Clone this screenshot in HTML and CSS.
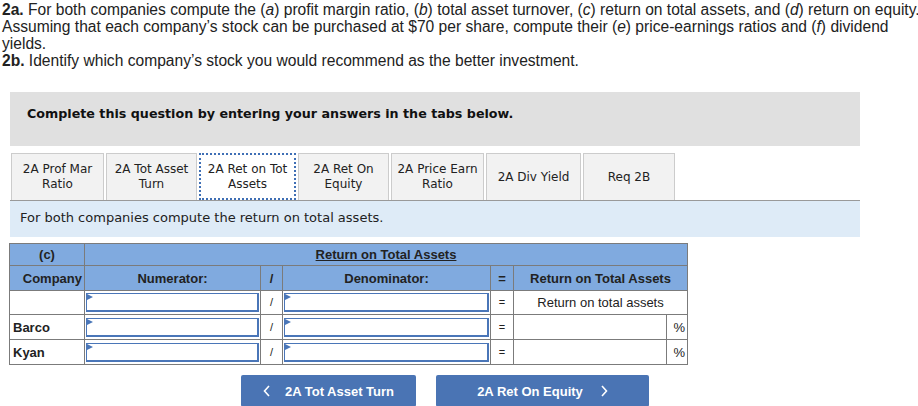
FILE: index.html
```html
<!DOCTYPE html>
<html lang="en">
<head>
    <meta charset="UTF-8">
    <title>Return on Total Assets</title>
    <link rel="stylesheet" href="styles.css">
</head>
<body>
    <div class="prompt">
        <p><b>2a.</b> For both companies compute the (<i>a</i>) profit margin ratio, (<i>b</i>) total asset turnover, (<i>c</i>) return on total assets, and (<i>d</i>) return on equity.</p>
        <p>Assuming that each company’s stock can be purchased at $70 per share, compute their (<i>e</i>) price-earnings ratios and (<i>f</i>) dividend</p>
        <p>yields.</p>
        <p><b>2b.</b> Identify which company’s stock you would recommend as the better investment.</p>
    </div>

    <div class="question">
        <div class="banner">Complete this question by entering your answers in the tabs below.</div>

        <div class="tabs">
            <div class="tab w93">2A Prof Mar<br>Ratio</div>
            <div class="tab w91">2A Tot Asset<br>Turn</div>
            <div class="tab active">2A Ret on Tot<br>Assets</div>
            <div class="tab w91">2A Ret On<br>Equity</div>
            <div class="tab w93">2A Price Earn<br>Ratio</div>
            <div class="tab w95">2A Div Yield</div>
            <div class="tab w92">Req 2B</div>
        </div>

        <div class="instructions">For both companies compute the return on total assets.</div>

        <table class="grid">
            <colgroup>
                <col class="c-company">
                <col class="c-num">
                <col class="c-op">
                <col class="c-den">
                <col class="c-eq">
                <col class="c-res">
                <col class="c-pct">
            </colgroup>
            <tr class="head1">
                <th>(c)</th>
                <th colspan="6"><u>Return on Total Assets</u></th>
            </tr>
            <tr class="head2">
                <th>Company</th>
                <th>Numerator:</th>
                <th>/</th>
                <th>Denominator:</th>
                <th>=</th>
                <th colspan="2">Return on Total Assets</th>
            </tr>
            <tr class="row r-label">
                <td></td>
                <td class="in"><div class="box"></div></td>
                <td class="op">/</td>
                <td class="in"><div class="box"></div></td>
                <td class="op">=</td>
                <td colspan="2" class="center">Return on total assets</td>
            </tr>
            <tr class="row">
                <td class="name">Barco</td>
                <td class="in"><div class="box"></div></td>
                <td class="op">/</td>
                <td class="in"><div class="box"></div></td>
                <td class="op">=</td>
                <td></td>
                <td class="pct">%</td>
            </tr>
            <tr class="row">
                <td class="name">Kyan</td>
                <td class="in"><div class="box"></div></td>
                <td class="op">/</td>
                <td class="in"><div class="box"></div></td>
                <td class="op">=</td>
                <td></td>
                <td class="pct">%</td>
            </tr>
        </table>

        <div class="nav">
            <button class="nav-btn prev">
                <svg width="8" height="12" viewBox="0 0 8 12"><path d="M6 1 L1.5 6 L6 11" fill="none" stroke="#fff" stroke-width="1.6"/></svg>
                <span>2A Tot Asset Turn</span>
            </button>
            <button class="nav-btn next">
                <span>2A Ret On Equity</span>
                <svg width="8" height="12" viewBox="0 0 8 12"><path d="M2 1 L6.5 6 L2 11" fill="none" stroke="#fff" stroke-width="1.6"/></svg>
            </button>
        </div>
    </div>
</body>
</html>
```

FILE: styles.css
```css
body {
    margin: 0;
    font-family: "Liberation Sans", Arial, sans-serif;
    color: #1a1a1a;
    background: #fff;
    overflow: hidden;
}
.prompt {
    padding: 1px 0 0 2px;
    font-size: 15.6px;
    line-height: 17px;
    white-space: nowrap;
    color: #222;
}
.prompt p {
    margin: 0;
}
.question {
    margin-left: 10px;
    width: 850px;
}
.banner {
    margin-top: 23px;
    height: 54px;
    box-sizing: border-box;
    padding: 14px 17px 0;
    background-color: #e0e0e0;
    font-family: "DejaVu Sans", Verdana, sans-serif;
    font-weight: bold;
    font-size: 12.7px;
    color: #111;
}
.tabs {
    display: flex;
    gap: 2px;
    margin-top: 7px;
    padding-left: 1px;
}
.tab {
    height: 47px;
    box-sizing: border-box;
    display: flex;
    align-items: center;
    justify-content: center;
    text-align: center;
    background-color: #f2f2f2;
    border: 1px solid #ccc;
    border-bottom: none;
    font-family: "DejaVu Sans", Verdana, sans-serif;
    font-size: 12px;
    line-height: 15px;
    color: #222;
}
.w91 { width: 91px; }
.w92 { width: 92px; }
.w93 { width: 93px; }
.w95 { width: 95px; }
.tab.active {
    width: 97px;
    background-color: #fff;
    border: 2px dotted #3f6fb5;
}
.instructions {
    height: 37px;
    box-sizing: border-box;
    border-top: 1px solid #999;
    background-color: #deebf7;
    padding: 9px 0 0 10px;
    font-family: "DejaVu Sans", Verdana, sans-serif;
    font-size: 13px;
    color: #222;
}
.grid {
    margin: 6px 0 0 -1px;
    border-collapse: collapse;
    table-layout: fixed;
    width: 678px;
    font-size: 13px;
    line-height: 15px;
    color: #222;
}
.c-company { width: 75px; }
.c-num { width: 176px; }
.c-op { width: 22px; }
.c-den { width: 208px; }
.c-eq { width: 23px; }
.c-res { width: 153px; }
.c-pct { width: 21px; }
.grid th,
.grid td {
    border: 1px solid #7b7b7b;
    padding: 0;
    vertical-align: middle;
}
.grid th {
    background-color: #80aadf;
    font-weight: bold;
    text-align: center;
}
.head1 th {
    height: 21px;
}
.head2 th {
    height: 24px;
}
.head2 th:first-child {
    text-align: right;
    padding-right: 2px;
}
.row td {
    height: 22px;
}
.row.r-label td {
    height: 21px;
}
.name {
    font-weight: bold;
    padding-left: 3px !important;
}
.op {
    text-align: center;
    font-size: 11px;
}
.center {
    text-align: center;
}
.pct {
    text-align: right;
    padding-right: 2px !important;
}
.in {
    padding: 1px !important;
}
.box {
    position: relative;
    height: 19px;
    box-sizing: border-box;
    border: 2px solid #4a76b8;
    border-top-width: 1px;
    border-left-width: 1px;
}
.box::before {
    content: "";
    position: absolute;
    top: 0;
    left: 0;
    border-top: 3.5px solid transparent;
    border-bottom: 3.5px solid transparent;
    border-left: 6px solid #4a76b8;
}
.nav {
    display: flex;
    gap: 20px;
    margin: 10px 0 0 231px;
}
.nav-btn {
    display: flex;
    align-items: center;
    justify-content: center;
    gap: 14px;
    height: 32px;
    border: none;
    border-radius: 2px;
    background-color: #4a74b4;
    color: #fff;
    font-family: "Liberation Sans", Arial, sans-serif;
    font-weight: bold;
    font-size: 13px;
    cursor: pointer;
}
.prev {
    width: 175px;
}
.next {
    width: 213px;
    gap: 17px;
}
```
